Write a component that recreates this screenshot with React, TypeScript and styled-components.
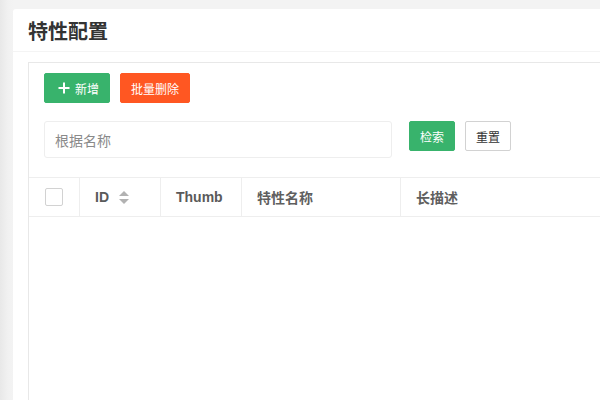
import React from 'react';
import styled, { createGlobalStyle } from 'styled-components';

const GlobalStyle = createGlobalStyle`
  html, body {
    margin: 0;
    padding: 0;
    height: 100%;
    overflow: hidden;
  }
  body {
    background: linear-gradient(to right, #e8e8e8 0px, #f1f1f1 8px, #f3f3f3 13px);
    font-family: "Liberation Sans", "Noto Sans CJK SC", sans-serif;
    color: #333;
  }
`;

const Page = styled.div`
  padding: 9px 0 0 13px;
  width: 1100px;
`;

const Card = styled.div`
  background: #fff;
  border-radius: 3px 3px 0 0;
  min-height: 400px;
`;

const CardHeader = styled.div`
  height: 43px;
  display: flex;
  align-items: center;
  padding: 0 15px;
  border-bottom: 1px solid #f4f4f4;
  box-sizing: border-box;
`;

const Title = styled.h1`
  margin: 0;
  font-size: 20px;
  font-weight: 700;
  color: #333;
  font-family: "Noto Sans CJK SC", sans-serif;
`;

const CardBody = styled.div`
  padding: 10px 15px 0;
`;

const Panel = styled.div`
  border: 1px solid #e8e8e8;
  min-height: 400px;
`;

const Toolbar = styled.div`
  display: flex;
  gap: 10px;
  padding: 10px 15px 0;
`;

const Btn = styled.button<{ $tone: 'green' | 'orange' | 'plain' }>`
  height: 30px;
  padding: 0 10px;
  box-sizing: border-box;
  border-radius: 2px;
  font-size: 12px;
  font-family: "Noto Sans CJK SC", sans-serif;
  display: inline-flex;
  align-items: center;
  gap: 5px;
  cursor: pointer;
  background: ${p => (p.$tone === 'green' ? '#38b36c' : p.$tone === 'orange' ? '#ff5722' : '#fff')};
  color: ${p => (p.$tone === 'plain' ? '#333' : '#fff')};
  border: 1px solid ${p => (p.$tone === 'green' ? '#38b36c' : p.$tone === 'orange' ? '#ff5722' : '#d2d2d2')};
`;

const AddBtn = styled(Btn)`
  padding: 0 10px 0 13px;
`;

const SearchRow = styled.div`
  display: flex;
  align-items: flex-start;
  padding: 18px 15px 0;
  gap: 10px;
`;

const SearchInput = styled.input`
  width: 348px;
  height: 37px;
  box-sizing: border-box;
  border: 1px solid #eee;
  border-radius: 3px;
  padding: 0 10px;
  font-size: 14px;
  font-family: "Noto Sans CJK SC", sans-serif;
  margin-right: 7px;
  outline: none;
  &::placeholder {
    color: #8a8a8a;
  }
`;

const Table = styled.div`
  margin-top: 19px;
`;

const HeadRow = styled.div`
  display: grid;
  grid-template-columns: 51px 81px 81px 159px 1fr;
  height: 40px;
  box-sizing: border-box;
  border-top: 1px solid #eee;
  border-bottom: 1px solid #eee;
`;

const HeadCell = styled.div<{ $center?: boolean }>`
  display: flex;
  align-items: center;
  justify-content: ${p => (p.$center ? 'center' : 'flex-start')};
  padding: ${p => (p.$center ? '0' : '0 15px')};
  border-right: 1px solid #eee;
  font-size: 14px;
  font-weight: 700;
  color: #5a5a5a;
  gap: 10px;
  &:last-child {
    border-right: none;
  }
`;

const CjkText = styled.span`
  font-family: "Noto Sans CJK SC", sans-serif;
  font-weight: 700;
  color: #5f5f5f;
`;

const Checkbox = styled.span`
  width: 18px;
  height: 18px;
  box-sizing: border-box;
  border: 1px solid #d2d2d2;
  border-radius: 2px;
  background: #fff;
`;

const PlusIcon = () => (
  <svg width="12" height="12" viewBox="0 0 12 12">
    <path d="M6 0.5v11M0.5 6h11" stroke="#fff" strokeWidth="2" />
  </svg>
);

const SortIcon = () => (
  <svg width="10" height="13" viewBox="0 0 10 13">
    <path d="M5 0L10 5H0Z" fill="#b2b2b2" />
    <path d="M5 13L0 8H10Z" fill="#b2b2b2" />
  </svg>
);

export default function App() {
  return (
    <>
      <GlobalStyle />
      <Page>
        <Card>
          <CardHeader>
            <Title>特性配置</Title>
          </CardHeader>
          <CardBody>
            <Panel>
              <Toolbar>
                <AddBtn $tone="green">
                  <PlusIcon />
                  新增
                </AddBtn>
                <Btn $tone="orange">批量删除</Btn>
              </Toolbar>
              <SearchRow>
                <SearchInput placeholder="根据名称" />
                <Btn $tone="green">检索</Btn>
                <Btn $tone="plain">重置</Btn>
              </SearchRow>
              <Table>
                <HeadRow>
                  <HeadCell $center>
                    <Checkbox />
                  </HeadCell>
                  <HeadCell>
                    ID <SortIcon />
                  </HeadCell>
                  <HeadCell>Thumb</HeadCell>
                  <HeadCell>
                    <CjkText>特性名称</CjkText>
                  </HeadCell>
                  <HeadCell>
                    <CjkText>长描述</CjkText>
                  </HeadCell>
                </HeadRow>
              </Table>
            </Panel>
          </CardBody>
        </Card>
      </Page>
    </>
  );
}
